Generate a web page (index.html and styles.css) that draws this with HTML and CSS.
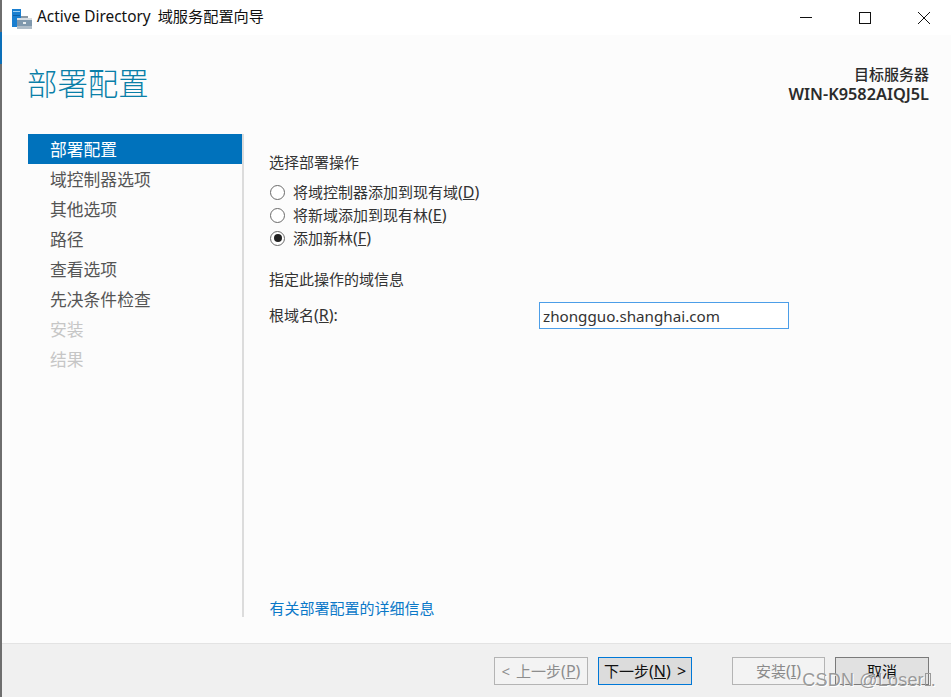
FILE: index.html
```html
<!DOCTYPE html>
<html lang="zh-CN">
<head>
<meta charset="utf-8">
<title>Active Directory 域服务配置向导</title>
<link rel="stylesheet" href="styles.css">
</head>
<body>
<div class="window">
  <div class="edge-accent"></div>
  <header class="titlebar">
    <svg class="app-icon" width="20" height="20" viewBox="0 0 20 20">
      <rect x="0" y="0" width="9" height="18" fill="#1a7fd0"/>
      <rect x="1" y="2" width="7" height="1" fill="#9fd0f2"/>
      <rect x="1" y="6" width="7" height="1" fill="#0c5fa8"/>
      <rect x="5" y="9" width="15" height="11" fill="#d7dde2"/>
      <rect x="5" y="11" width="15" height="6" fill="#7f98ad"/>
      <rect x="5" y="17" width="15" height="3" fill="#aebcc8"/>
      <rect x="9" y="7" width="7" height="2" fill="#8d9aa5"/>
      <rect x="11" y="13" width="3" height="2" fill="#e8edf0"/>
    </svg>
    <div class="window-title"><span class="title-latin">Active Directory </span><span class="title-cjk">域服务配置向导</span></div>
    <div class="controls">
      <svg width="12" height="12" viewBox="0 0 12 12"><path d="M0 5.5H12" stroke="#111" fill="none"/></svg>
      <svg width="12" height="12" viewBox="0 0 12 12"><rect x="0.5" y="0.5" width="11" height="11" stroke="#111" fill="none"/></svg>
      <svg width="12" height="12" viewBox="0 0 12 12"><path d="M0 0L12 12M12 0L0 12" stroke="#111" fill="none"/></svg>
    </div>
  </header>

  <section class="page-head">
    <h1 class="page-title">部署配置</h1>
    <div class="target">
      <div>目标服务器</div>
      <div class="target-name">WIN-K9582AIQJ5L</div>
    </div>
  </section>

  <div class="body">
    <nav class="steps">
      <div class="step active">部署配置</div>
      <div class="step">域控制器选项</div>
      <div class="step">其他选项</div>
      <div class="step">路径</div>
      <div class="step">查看选项</div>
      <div class="step">先决条件检查</div>
      <div class="step disabled">安装</div>
      <div class="step disabled">结果</div>
    </nav>
    <main class="content">
      <div class="section-label">选择部署操作</div>
      <div class="radios">
        <div class="radio-row"><span class="radio"></span><span>将域控制器添加到现有域<span class="key">(<u>D</u>)</span></span></div>
        <div class="radio-row"><span class="radio"></span><span>将新域添加到现有林<span class="key">(<u>E</u>)</span></span></div>
        <div class="radio-row"><span class="radio checked"></span><span>添加新林<span class="key">(<u>F</u>)</span></span></div>
      </div>
      <div class="section-label second">指定此操作的域信息</div>
      <div class="field">
        <div class="field-label">根域名<span class="key">(<u>R</u>):</span></div>
        <div class="field-input">zhongguo.shanghai.com</div>
      </div>
      <a class="more-link">有关部署配置的详细信息</a>
    </main>
  </div>

  <footer class="footer">
    <div class="btn btn-disabled">&lt; 上一步<span class="key">(<u>P</u>)</span></div>
    <div class="btn btn-primary">下一步<span class="key">(<u>N</u>) &gt;</span></div>
    <div class="btn btn-disabled btn-install">安装<span class="key">(<u>I</u>)</span></div>
    <div class="btn btn-cancel">取消</div>
  </footer>

  <div class="watermark">CSDN @Loser<span class="tofu"></span>.</div>
</div>
</body>
</html>
```

FILE: styles.css
```css
* { box-sizing: border-box; }
html, body { margin: 0; padding: 0; }
body {
  width: 951px;
  height: 697px;
  overflow: hidden;
  font-family: "Noto Sans", "Noto Sans CJK SC", sans-serif;
  font-size: 15px;
  color: #333;
}
u { text-underline-offset: 1px; }
.key { font-size: 16px; }
.window {
  position: relative;
  width: 951px;
  height: 697px;
  border-left: 2px solid #6e6e6e;
  background: #fcfcfc;
  display: flex;
  flex-direction: column;
}
.edge-accent {
  position: absolute;
  left: -2px;
  top: 32px;
  width: 2px;
  height: 32px;
  background: #0b6fb8;
}
.titlebar {
  height: 35px;
  flex: none;
  background: #fff;
  display: flex;
  align-items: center;
  padding: 0 21px 3px 10px;
}
.app-icon { flex: none; margin: 5px 5px 0 0; }
.window-title { font-size: 15px; color: #111; line-height: 20px; }
.title-latin { font-size: 15.4px; }
.title-cjk { font-size: 15.2px; margin-left: 3px; }
.controls {
  margin-left: auto;
  display: flex;
  gap: 47px;
  align-items: center;
  padding-top: 3px;
}
.page-head {
  height: 99px;
  flex: none;
  display: flex;
  justify-content: space-between;
  padding: 24px 22px 0 25px;
}
.page-title {
  margin: 0;
  font-size: 30.4px;
  line-height: 50px;
  font-weight: 300;
  color: #0a7fa8;
}
.target {
  text-align: right;
  font-size: 15px;
  line-height: 20px;
  padding-top: 5px;
  font-weight: 500;
  color: #2b2b2b;
}
.target-name { font-size: 16.3px; font-weight: 600; }
.body {
  height: 483px;
  flex: none;
  display: flex;
  padding-left: 26px;
}
.steps {
  width: 216px;
  flex: none;
  border-right: 2px solid #dcdcdc;
}
.step {
  width: 214px;
  height: 30px;
  line-height: 31px;
  padding-left: 22px;
  font-size: 16.8px;
  color: #555;
}
.step.active { background: #0072bc; color: #fff; }
.step.disabled { color: #c6c6c6; }
.content {
  flex: 1;
  padding: 18px 0 0 25px;
  display: flex;
  flex-direction: column;
  position: relative;
}
.section-label { line-height: 20px; }
.section-label.second { margin-top: 21px; }
.radios { margin-top: 10px; display: flex; flex-direction: column; gap: 3px; }
.radio-row { height: 20px; line-height: 20px; display: flex; align-items: center; gap: 8px; margin-left: 1px; }
.radio {
  width: 15px;
  height: 15px;
  border: 1px solid #6a6a6a;
  border-radius: 50%;
  background: #fff;
  flex: none;
  display: flex;
  align-items: center;
  justify-content: center;
}
.radio.checked::after {
  content: "";
  width: 8px;
  height: 8px;
  border-radius: 50%;
  background: #222;
}
.field { display: flex; align-items: flex-start; margin-top: 11px; }
.field-label { width: 270px; flex: none; line-height: 28px; padding-top: 1px; height: 28px; }
.field-input {
  width: 250px;
  height: 27px;
  line-height: 26px;
  padding-left: 3px;
  margin-top: 2px;
  border: 1px solid #4c9ee8;
  background: #fff;
  font-size: 15.2px;
  color: #333;
}
.more-link {
  margin-top: auto;
  margin-left: 0.5px;
  line-height: 18px;
  color: #0a78c8;
}
.footer {
  margin-top: auto;
  height: 54px;
  flex: none;
  border-top: 1px solid #e3e3e3;
  background: #f0f0f0;
  display: flex;
  justify-content: flex-end;
  align-items: flex-start;
  gap: 10px;
  padding: 13px 22px 0 0;
}
.btn {
  width: 94px;
  height: 28px;
  line-height: 26px;
  text-align: center;
  font-size: 15px;
  word-spacing: 2px;
  border: 1px solid #adadad;
  background: #e1e1e1;
  color: #111;
}
.btn-disabled { background: #f3f3f3; color: #8d8d8d; border-color: #b4b4b4; }
.btn-primary { background: #dcdcdc; border-color: #0078d7; }
.btn-install { margin-left: 30px; width: 93px; color: #8a8a8a; }
.btn-cancel { background: #e1e1e1; border-color: #7a7a7a; }
.watermark {
  position: absolute;
  right: 15px;
  bottom: 6px;
  font-family: "Liberation Sans", sans-serif;
  font-size: 18px;
  line-height: 22px;
  letter-spacing: 0.2px;
  color: #9a9a9a;
  text-shadow: 1px 1px 0 #fff;
}
.tofu {
  display: inline-block;
  width: 6px;
  height: 13px;
  border: 1px solid #9a9a9a;
  margin-left: 1px;
}
```
